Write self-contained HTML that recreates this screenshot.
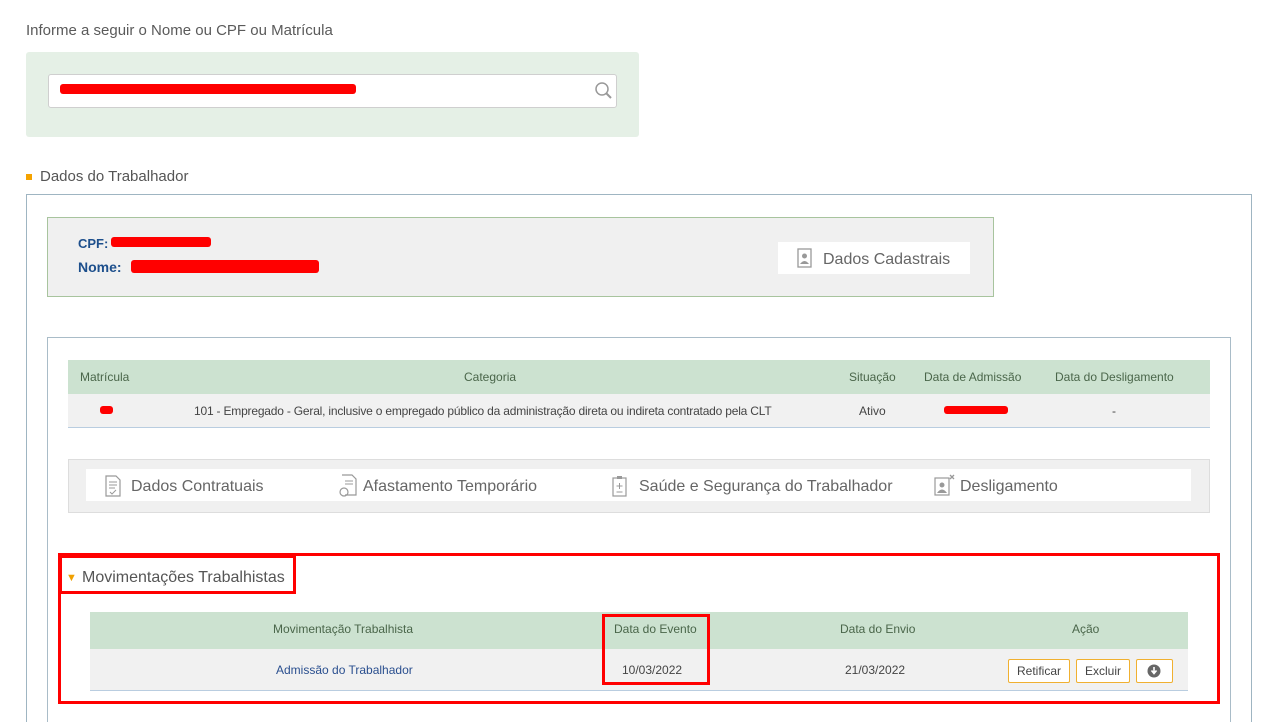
<!DOCTYPE html>
<html><head><meta charset="utf-8"><style>
*{box-sizing:border-box;margin:0;padding:0}
html,body{width:1270px;height:722px;overflow:hidden}
body{background:#fff;font-family:"Liberation Sans",Arial,sans-serif;color:#555;position:relative}
.a{position:absolute}
.red{background:#f00;border-radius:3px}
.t{white-space:nowrap}
.h{font-size:12px;color:#4a664a}
</style></head><body>
<div class="a t" style="left:26px;top:22px;font-size:15px;color:#5a5a5a">Informe a seguir o Nome ou CPF ou Matrícula</div>
<div class="a" style="left:26px;top:52px;width:613px;height:85px;background:#e5f0e6;border-radius:3px"></div>
<div class="a" style="left:48px;top:74px;width:569px;height:34px;background:#fff;border:1px solid #cfcfcf;border-radius:3px"></div>
<div class="a red" style="left:60px;top:84px;width:296px;height:10px"></div>
<svg class="a" style="left:594px;top:81px" width="20" height="20" viewBox="0 0 20 20"><circle cx="8" cy="8" r="6" fill="none" stroke="#999" stroke-width="1.5"/><line x1="12.5" y1="12.5" x2="17" y2="17" stroke="#999" stroke-width="2"/></svg>
<div class="a" style="left:26px;top:174px;width:6px;height:6px;background:#f5a300"></div>
<div class="a t" style="left:40px;top:168px;font-size:15px;color:#555">Dados do Trabalhador</div>
<div class="a" style="left:26px;top:194px;width:1226px;height:560px;border:1px solid #9fb5c2;border-bottom:none"></div>
<div class="a" style="left:47px;top:217px;width:947px;height:80px;background:#f0f0f0;border:1px solid #a8c49e"></div>
<div class="a t" style="left:78px;top:236px;font-size:13px;font-weight:bold;color:#1d4f8c">CPF:</div>
<div class="a red" style="left:111px;top:237px;width:100px;height:10px"></div>
<div class="a t" style="left:78px;top:259px;font-size:14px;font-weight:bold;color:#1d4f8c">Nome:</div>
<div class="a red" style="left:131px;top:260px;width:188px;height:13px"></div>
<div class="a" style="left:778px;top:242px;width:192px;height:32px;background:#fff"></div>
<svg class="a" style="left:796px;top:248px" width="18" height="20" viewBox="0 0 18 20"><rect x="2" y="1" width="13" height="18" fill="none" stroke="#999" stroke-width="1.3"/><circle cx="8.5" cy="8" r="2.5" fill="#999"/><path d="M4 16 q4.5-6 9 0z" fill="#999"/></svg>
<div class="a t" style="left:823px;top:251px;font-size:16px;color:#666">Dados Cadastrais</div>
<div class="a" style="left:47px;top:337px;width:1184px;height:420px;border:1px solid #a9bcc8;border-bottom:none"></div>
<div class="a" style="left:68px;top:360px;width:1142px;height:34px;background:#cce2d0"></div>
<div class="a" style="left:68px;top:394px;width:1142px;height:34px;background:#f1f1f1;border-bottom:1px solid #b9cde0"></div>
<div class="a t h" style="left:80px;top:370px">Matrícula</div>
<div class="a t h" style="left:464px;top:370px">Categoria</div>
<div class="a t h" style="left:849px;top:370px">Situação</div>
<div class="a t h" style="left:924px;top:370px">Data de Admissão</div>
<div class="a t h" style="left:1055px;top:370px">Data do Desligamento</div>
<div class="a red" style="left:100px;top:406px;width:13px;height:8px"></div>
<div class="a t" style="left:194px;top:404px;font-size:12px;color:#444;letter-spacing:-0.2px">101 - Empregado - Geral, inclusive o empregado público da administração direta ou indireta contratado pela CLT</div>
<div class="a t" style="left:859px;top:404px;font-size:12px;color:#444">Ativo</div>
<div class="a red" style="left:944px;top:406px;width:64px;height:8px"></div>
<div class="a t" style="left:1112px;top:404px;font-size:12px;color:#444">-</div>
<div class="a" style="left:68px;top:459px;width:1142px;height:54px;background:#f0f0f0;border:1px solid #ddd"></div>
<div class="a" style="left:86px;top:469px;width:1105px;height:32px;background:#fff"></div>
<svg class="a" style="left:104px;top:475px" width="18" height="22" viewBox="0 0 18 22"><path d="M2 1h10l4 4v16H2z" fill="none" stroke="#999" stroke-width="1.2"/><path d="M5 7h8M5 10h8M5 13h6M6 17l2 2 4-4" stroke="#999" fill="none"/></svg>
<div class="a t" style="left:131px;top:478px;font-size:16px;color:#666">Dados Contratuais</div>
<svg class="a" style="left:336px;top:474px" width="22" height="24" viewBox="0 0 22 24"><path d="M6 1h10l4 4v16H9" fill="none" stroke="#999" stroke-width="1.2"/><path d="M9 7h8M9 10h8" stroke="#999"/><circle cx="8" cy="18" r="4" fill="none" stroke="#999" stroke-width="1.2"/></svg>
<div class="a t" style="left:363px;top:478px;font-size:16px;color:#666">Afastamento Temporário</div>
<svg class="a" style="left:612px;top:475px" width="16" height="22" viewBox="0 0 16 22"><rect x="1" y="3" width="13" height="18" fill="none" stroke="#999" stroke-width="1.2"/><rect x="5" y="1" width="5" height="3" fill="#999"/><path d="M7.5 8v6M4.5 11h6M4.5 17h6" stroke="#999"/></svg>
<div class="a t" style="left:639px;top:478px;font-size:16px;color:#666">Saúde e Segurança do Trabalhador</div>
<svg class="a" style="left:934px;top:474px" width="22" height="22" viewBox="0 0 22 22"><rect x="1" y="4" width="14" height="17" fill="none" stroke="#999" stroke-width="1.2"/><circle cx="8" cy="11" r="2.5" fill="#999"/><path d="M3 19q5-7 10 0z" fill="#999"/><path d="M16 1l4 4M20 1l-4 4" stroke="#999" stroke-width="1.3"/></svg>
<div class="a t" style="left:960px;top:478px;font-size:16px;color:#666">Desligamento</div>
<div class="a" style="left:58px;top:553px;width:1162px;height:151px;border:3px solid #f00"></div>
<div class="a" style="left:59px;top:555px;width:237px;height:39px;border:3px solid #f00"></div>
<div class="a t" style="left:66px;top:572px;font-size:11px;color:#f0a000">▼</div>
<div class="a t" style="left:82px;top:569px;font-size:16px;color:#555">Movimentações Trabalhistas</div>
<div class="a" style="left:90px;top:612px;width:1098px;height:37px;background:#cce2d0"></div>
<div class="a" style="left:90px;top:649px;width:1098px;height:42px;background:#f1f1f1;border-bottom:1px solid #b9cde0"></div>
<div class="a t h" style="left:273px;top:622px">Movimentação Trabalhista</div>
<div class="a t h" style="left:614px;top:622px">Data do Evento</div>
<div class="a t h" style="left:840px;top:622px">Data do Envio</div>
<div class="a t h" style="left:1072px;top:622px">Ação</div>
<div class="a t" style="left:276px;top:663px;font-size:12px;color:#2a4f8f">Admissão do Trabalhador</div>
<div class="a t" style="left:622px;top:663px;font-size:12px;color:#444">10/03/2022</div>
<div class="a t" style="left:845px;top:663px;font-size:12px;color:#444">21/03/2022</div>
<div class="a" style="left:602px;top:614px;width:108px;height:71px;border:3px solid #f00"></div>
<div class="a t" style="left:1008px;top:659px;width:62px;height:24px;background:#fff;border:1px solid #f0b030;border-radius:2px;font-size:12px;color:#444;text-align:center;line-height:22px">Retificar</div>
<div class="a t" style="left:1076px;top:659px;width:54px;height:24px;background:#fff;border:1px solid #f0b030;border-radius:2px;font-size:12px;color:#444;text-align:center;line-height:22px">Excluir</div>
<div class="a" style="left:1136px;top:659px;width:37px;height:24px;background:#fff;border:1px solid #f0b030;border-radius:2px"></div>
<svg class="a" style="left:1147px;top:664px" width="14" height="14" viewBox="0 0 14 14"><circle cx="7" cy="7" r="6.5" fill="#666"/><path d="M7 3v6M4.5 6.5L7 9.5 9.5 6.5" stroke="#fff" stroke-width="1.6" fill="none"/></svg>
</body></html>
